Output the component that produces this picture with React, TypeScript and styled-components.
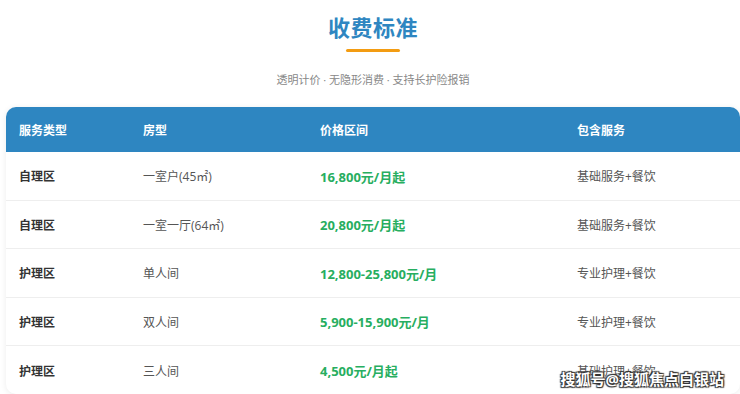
import React from "react";
import styled, { createGlobalStyle } from "styled-components";

const GlobalStyle = createGlobalStyle`
  html, body {
    margin: 0;
    padding: 0;
    background: #fff;
  }
  body {
    font-family: "Open Sans", "Noto Sans CJK SC", sans-serif;
    overflow: hidden;
  }
`;

type Row = {
  type: string;
  room: string;
  price: string;
  service: string;
};

const rows: Row[] = [
  { type: "自理区", room: "一室户(45㎡)", price: "16,800元/月起", service: "基础服务+餐饮" },
  { type: "自理区", room: "一室一厅(64㎡)", price: "20,800元/月起", service: "基础服务+餐饮" },
  { type: "护理区", room: "单人间", price: "12,800-25,800元/月", service: "专业护理+餐饮" },
  { type: "护理区", room: "双人间", price: "5,900-15,900元/月", service: "专业护理+餐饮" },
  { type: "护理区", room: "三人间", price: "4,500元/月起", service: "基础护理+餐饮" },
];

const App = () => {
  return (
    <Page>
      <GlobalStyle />
      <Heading>
        <Title>收费标准</Title>
        <Underline />
        <Subtitle>透明计价 · 无隐形消费 · 支持长护险报销</Subtitle>
      </Heading>

      <Card>
        <HeadRow>
          <HeadCell>服务类型</HeadCell>
          <HeadCell>房型</HeadCell>
          <HeadCell>价格区间</HeadCell>
          <HeadCell>包含服务</HeadCell>
        </HeadRow>
        {rows.map((r, i) => (
          <BodyRow key={i} last={i === rows.length - 1}>
            <TypeCell>{r.type}</TypeCell>
            <Cell>{r.room}</Cell>
            <PriceCell>{r.price}</PriceCell>
            <Cell>{r.service}</Cell>
          </BodyRow>
        ))}
      </Card>

      {/* watermark sits over the last row, as in the source */}
      <Watermark>搜狐号@搜狐焦点白银站</Watermark>
    </Page>
  );
};

export default App;

const Page = styled.div`
  position: relative;
  width: 740px;
  height: 394px;
  overflow: hidden;
  padding: 0 0 0 6px;
  box-sizing: border-box;
  display: flex;
  flex-direction: column;
`;

const Heading = styled.div`
  display: flex;
  flex-direction: column;
  align-items: center;
  padding-top: 12px;
  height: 96px;
  box-sizing: border-box;
`;

const Title = styled.h2`
  margin: 0;
  font-size: 22px;
  line-height: 30px;
  font-weight: 700;
  color: #2e86c1;
  letter-spacing: 0.5px;
`;

const Underline = styled.div`
  width: 54px;
  height: 3px;
  background: #f39c12;
  border-radius: 2px;
  margin-top: 7px;
`;

const Subtitle = styled.p`
  margin: 20px 0 0;
  font-size: 11px;
  line-height: 16px;
  color: #888;
`;

const Card = styled.div`
  margin-top: 11px;
  width: 734px;
  border-radius: 10px;
  overflow: hidden;
  background: #fff;
  box-shadow: 0 1px 6px rgba(0, 0, 0, 0.08);
`;

const grid = `
  display: grid;
  grid-template-columns: 124px 177px 257px 1fr;
  align-items: center;
  padding-left: 13px;
  box-sizing: border-box;
`;

const HeadRow = styled.div`
  ${grid}
  height: 45.5px;
  background: #2e86c1;
`;

const HeadCell = styled.div`
  font-size: 12px;
  font-weight: 700;
  color: #fff;
`;

const BodyRow = styled.div<{ last?: boolean }>`
  ${grid}
  height: 48.5px;
  border-bottom: ${(p) => (p.last ? "none" : "1px solid #eee")};
`;

const Cell = styled.div`
  font-size: 12px;
  color: #555;
`;

const TypeCell = styled(Cell)`
  font-weight: 700;
  color: #333;
`;

const PriceCell = styled.div`
  font-size: 13px;
  font-weight: 700;
  color: #27ae60;
`;

const Watermark = styled.div`
  position: absolute;
  right: 16px;
  bottom: 5px;
  font-size: 15px;
  font-weight: 700;
  color: #fff;
  text-shadow: 1px 1px 1px #333, -1px -1px 1px #333, 1px -1px 1px #333, -1px 1px 1px #333;
`;
